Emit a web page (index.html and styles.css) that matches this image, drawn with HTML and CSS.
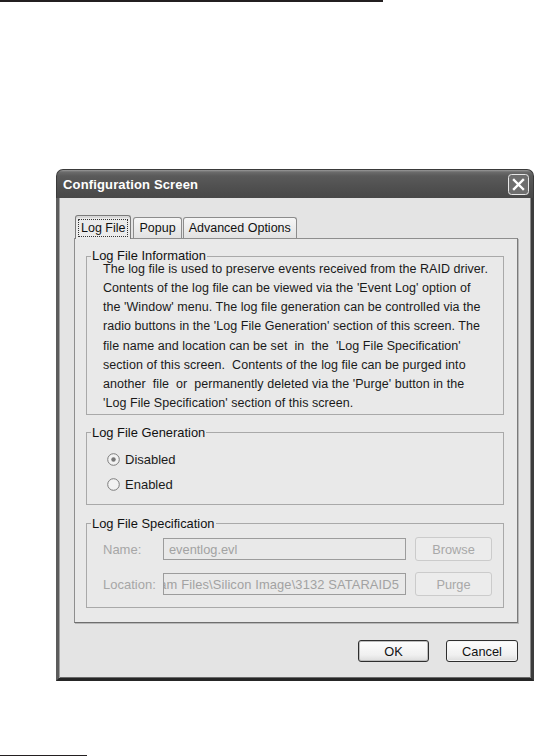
FILE: index.html
```html
<!DOCTYPE html>
<html>
<head>
<meta charset="utf-8">
<link rel="stylesheet" href="styles.css">
</head>
<body>
<div class="topline"></div>
<div class="dialog">
  <div class="titlebar">
    <span class="title">Configuration Screen</span>
    <span class="close"><svg width="21" height="21" viewBox="0 0 21 21"><rect x="0.5" y="0.5" width="20" height="20" rx="3" fill="#6e6e6e" stroke="#e8e8e8"/><path d="M6 6 L15 15 M15 6 L6 15" stroke="#fff" stroke-width="2.4" stroke-linecap="square"/></svg></span>
  </div>
  <div class="dbody">
    <div class="tabs">
      <div class="tab active"><span class="focus">Log File</span></div>
      <div class="tab">Popup</div>
      <div class="tab">Advanced Options</div>
    </div>
    <div class="panel">
      <div class="group g1">
        <div class="gtitle">Log File Information</div>
        <p class="info">The log file is used to preserve events received from the RAID driver.<br>Contents of the log file can be viewed via the 'Event Log' option of<br>the 'Window' menu. The log file generation can be controlled via the<br>radio buttons in the 'Log File Generation' section of this screen. The<br>file name and location can be set&nbsp; in&nbsp; the&nbsp; 'Log File Specification'<br>section of this screen.&nbsp; Contents of the log file can be purged into<br>another&nbsp; file&nbsp; or&nbsp; permanently deleted via the 'Purge' button in the<br>'Log File Specification' section of this screen.</p>
      </div>
      <div class="group g2">
        <div class="gtitle">Log File Generation</div>
        <div class="radios">
          <div class="radio"><svg width="13" height="13" viewBox="0 0 13 13"><circle cx="6.5" cy="6.5" r="5.8" fill="#f2f2f2" stroke="#7c7c7c" stroke-width="1"/><circle cx="6.5" cy="6.5" r="2.2" fill="#777"/></svg><span>Disabled</span></div>
          <div class="radio"><svg width="13" height="13" viewBox="0 0 13 13"><circle cx="6.5" cy="6.5" r="5.8" fill="#f2f2f2" stroke="#7c7c7c" stroke-width="1"/></svg><span>Enabled</span></div>
        </div>
      </div>
      <div class="group g3">
        <div class="gtitle">Log File Specification</div>
        <div class="frow">
          <span class="flabel">Name:</span>
          <div class="field"><span>eventlog.evl</span></div>
          <div class="dbtn">Browse</div>
        </div>
        <div class="frow">
          <span class="flabel">Location:</span>
          <div class="field clip"><span>am Files\Silicon Image\3132 SATARAID5</span></div>
          <div class="dbtn">Purge</div>
        </div>
      </div>
    </div>
    <div class="buttons">
      <div class="btn default">OK</div>
      <div class="btn">Cancel</div>
    </div>
  </div>
</div>
<div class="bottomline"></div>
</body>
</html>
```

FILE: styles.css
```css
* { box-sizing: border-box; }
html, body { margin: 0; padding: 0; background: #fff; }
body {
  width: 537px;
  height: 756px;
  overflow: hidden;
  font-family: "Liberation Sans", Arial, sans-serif;
  font-size: 13px;
  color: #1a1a1a;
}
.topline { width: 383px; height: 2px; background: #231f20; }
.bottomline { width: 87px; height: 1px; background: #231f20; margin-top: 74px; }

.dialog {
  margin: 167px 0 0 56px;
  width: 478px;
  display: flex;
  flex-direction: column;
}
.titlebar {
  height: 29px;
  border-radius: 7px 7px 0 0;
  background: linear-gradient(#9a9a9a 0, #6c6c6c 2px, #5a5a5a 6px, #505050 60%, #484848 100%);
  display: flex;
  align-items: center;
  justify-content: space-between;
  padding: 0 4px 0 6px;
  border: 1px solid #3a3a3a;
  border-bottom: none;
}
.title {
  color: #fff;
  font-weight: bold;
  font-size: 13px;
  letter-spacing: 0.15px;
  margin-top: 1px;
}
.close { display: flex; margin-top: 1px; }

.dbody {
  height: 483px;
  background: #e4e4e4;
  border-left: 3px solid #5c5c5c;
  border-right: 3px solid #3c3c3c;
  border-bottom: 3px solid #262626;
  box-shadow: inset 1px 0 0 #a0a0a0, inset -1px 0 0 #8a8a8a, inset 0 -1px 0 #6a6a6a;
  padding: 17px 13px 0 15px;
  display: flex;
  flex-direction: column;
}

.tabs { display: flex; align-items: flex-end; height: 23px; padding-left: 1px; }
.tab {
  height: 21px;
  padding: 0 5px;
  border: 1px solid #8c8c8c;
  border-bottom: none;
  border-radius: 3px 3px 0 0;
  background: linear-gradient(#f6f6f6, #e2e2e2);
  font-size: 12.5px;
  display: flex;
  align-items: center;
  margin-left: 1px;
  color: #111;
}
.tab.active {
  height: 24px;
  margin-bottom: -1px;
  margin-left: 0;
  margin-right: 1px;
  padding: 0 4px;
  background: #ebebeb;
  position: relative;
  z-index: 1;
  border-color: #7a7a7a;
  box-shadow: inset 0 2px 0 #d8d8d8;
}
.focus { outline: 1px dotted #333; outline-offset: 1px; padding: 0 1px; }

.panel {
  height: 385px;
  border: 1px solid #8e8e8e;
  border-right-color: #7a7a7a;
  border-bottom-color: #6e6e6e;
  box-shadow: 1px 1px 0 #b8b8b8;
  background: #e9e9e9;
  padding: 17px 13px 0 11px;
}

.group {
  border: 1px solid #a9a9a9;
}
.gtitle {
  width: fit-content;
  line-height: 15px;
  margin: -8px 0 0 4px;
  padding: 0 1px;
  background: #e9e9e9;
  color: #111;
  font-size: 12.9px;
}
.g1 { padding: 0 0 0 16px; height: 159px; }
.g1 .gtitle { margin-left: -12px; margin-top: -9px; margin-bottom: -3px; }
.info {
  margin: 0;
  line-height: 19.15px;
  font-size: 12.5px;
  letter-spacing: 0.05px;
  white-space: nowrap;
  color: #1a1a1a;
}

.g2 { margin-top: 17px; height: 73px; }
.radios { padding: 7px 0 0 20px; }
.radio { height: 25px; display: flex; align-items: center; gap: 5px; font-size: 13px; }
.radio svg { flex: none; }

.g3 { margin-top: 18px; height: 85px; padding: 0 11px 0 16px; }
.g3 .gtitle { margin-left: -12px; margin-bottom: 6px; }
.frow { height: 24px; display: flex; align-items: center; }
.frow + .frow { margin-top: 11px; }
.flabel { width: 60px; flex: none; color: #a6a6a6; font-size: 13px; }
.field {
  width: 243px;
  flex: none;
  height: 22px;
  border: 1px solid #9c9c9c;
  background: #e9e9e9;
  color: #a2a2a2;
  font-size: 12.8px;
  display: flex;
  align-items: center;
  padding: 0 5px;
  white-space: nowrap;
  overflow: hidden;
}
.field.clip { justify-content: flex-end; padding: 0 6px 0 0; font-size: 12.9px; letter-spacing: 0.12px; }
.field.clip span { flex: none; }
.dbtn {
  margin-left: 9px;
  width: 77px;
  flex: none;
  height: 24px;
  border: 1px solid #cbcbcb;
  border-radius: 3px;
  background: #ececec;
  color: #a8a8a8;
  font-size: 12.8px;
  display: flex;
  align-items: center;
  justify-content: center;
}

.buttons {
  margin-top: 17px;
  display: flex;
  justify-content: flex-end;
  gap: 17px;
}
.btn {
  width: 71px;
  height: 22px;
  border: 1px solid #2e2e2e;
  border-radius: 3px;
  background: linear-gradient(#fdfdfd, #f0f0f0 70%, #dcdcdc);
  box-shadow: inset 0 0 0 1px #f4f4f4;
  display: flex;
  align-items: center;
  justify-content: center;
  font-size: 12.8px;
  color: #111;
}
.btn.default { box-shadow: inset 0 0 0 1px #bdbdbd; }
.btn + .btn { width: 72px; }
```
